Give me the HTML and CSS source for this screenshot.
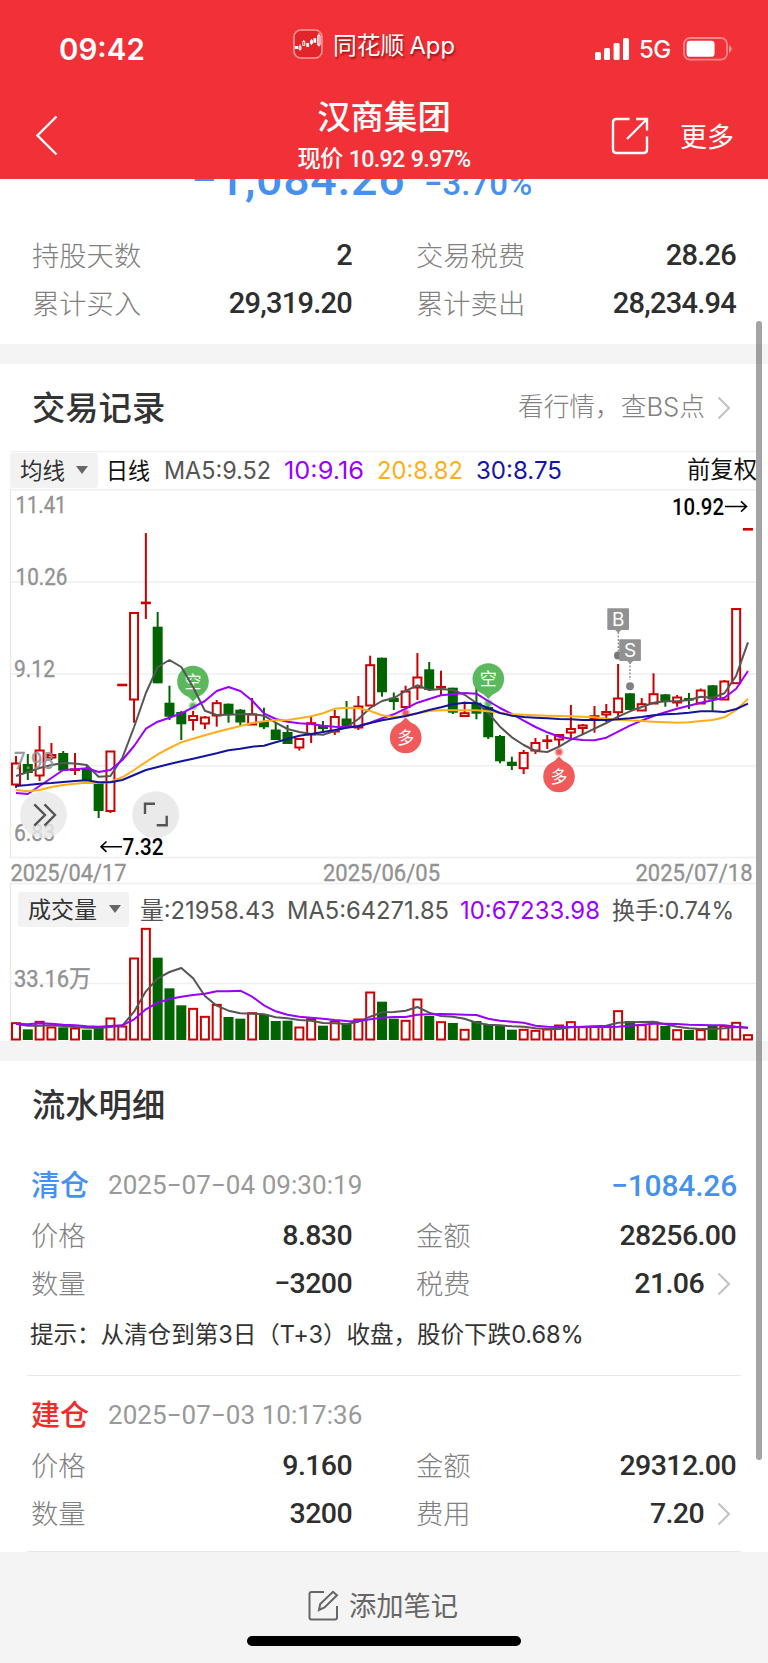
FILE: index.html
```html
<!DOCTYPE html>
<html lang="zh-CN">
<head>
<meta charset="utf-8">
<title>汉商集团</title>
<link rel="stylesheet" href="styles.css">
</head>
<body>
<div class="screen">
  <header class="header">
    <div class="status">
      <span class="time">09:42</span>
      <span class="brand">
        <svg class="brand-icon" width="30" height="30" viewBox="0 0 30 30">
          <rect x="1" y="1" width="28" height="28" rx="7" fill="#e3242b" stroke="#ff9a9c" stroke-width="1.6"/>
          <path fill="#fff" d="M2 17h3v3H2zM13.3 14h2.8v4h-2.8zM20.4 9.3h2.8v4.4h-2.8z"/>
          <path fill="none" stroke="#fff" d="M6 17.5h2v3H6zM7 15.5v6M9.8 12.5h2v4h-2zM10.8 11v2M17.5 11.5h2v3h-2zM18.5 10v6M24.7 6.5h2.4v9.5h-2.4zM25.9 4v13.5"/>
        </svg>
        <span class="brand-name">同花顺<span class="brand-app">App</span></span>
      </span>
      <span class="signal">
        <svg width="34" height="23" viewBox="0 0 34 23" fill="#fff">
          <rect x="0" y="14" width="6" height="8" rx="1.6"/><rect x="9" y="10" width="6" height="12" rx="1.6"/>
          <rect x="18.6" y="5" width="6" height="17" rx="1.6"/><rect x="28" y="0" width="6" height="22" rx="1.6"/>
        </svg>
        <span class="net">5G</span>
        <svg width="50" height="24" viewBox="0 0 50 24">
          <rect x="1" y="1" width="43" height="21.6" rx="6" fill="none" stroke="#fff" stroke-opacity=".42" stroke-width="1.8"/>
          <rect x="3.6" y="3.8" width="28" height="16" rx="3.4" fill="#fff"/>
          <path d="M46 8.2c3.6 1.6 3.6 5.8 0 7.4z" fill="#fff" fill-opacity=".5"/>
        </svg>
      </span>
    </div>
    <div class="nav">
      <svg class="back" width="24" height="42" viewBox="0 0 24 42" fill="none" stroke="#fff" stroke-width="2.4"><path d="M21.5 2.5 2.5 21.5l19 19"/></svg>
      <div class="stock">
        <h1 class="stock-name">汉商集团</h1>
        <p class="stock-price">现价 10.92 9.97%</p>
      </div>
      <svg class="share" width="38" height="38" viewBox="0 0 38 38" fill="none" stroke="#fff" stroke-width="2.4"><path d="M18.500 2H5.500Q2 2 2 5.500v27Q2 36 5.500 36h27q3.500 0 3.500-3.500V19.500M25 2h11v11.500M36 2 16 22"/></svg>
      <span class="more">更多</span>
    </div>
  </header>

  <section class="summary">
    <div class="profit"><span class="profit-amount">−1,084.26</span><span class="profit-rate">−3.70%</span></div>
    <div class="row"><span class="label">持股天数</span><span class="num">2</span><span class="label">交易税费</span><span class="num">28.26</span></div>
    <div class="row"><span class="label">累计买入</span><span class="num">29,319.20</span><span class="label">累计卖出</span><span class="num">28,234.94</span></div>
  </section>
  <div class="band"></div>

  <div class="section-head">
    <h2 class="title">交易记录</h2>
    <span class="link">看行情，查BS点</span>
    <svg class="chev" width="14" height="24" viewBox="0 0 14 24"><path d="M1.500 1.500 12 12 1.500 22.500"/></svg>
  </div>
  <svg class="chart" id="chart" width="768" height="590" viewBox="0 451 768 590"></svg>
  <div class="band"></div>

  <div class="section-head"><h2 class="title">流水明细</h2></div>
  <section class="record">
    <div class="record-head"><span class="kind sell">清仓</span><span class="stamp">2025−07−04 09:30:19</span><span class="gain">−1084.26</span></div>
    <div class="row"><span class="label">价格</span><span class="num">8.830</span><span class="label">金额</span><span class="num">28256.00</span></div>
    <div class="row"><span class="label">数量</span><span class="num">−3200</span><span class="label">税费</span><span class="num more-num">21.06<svg class="chev" width="14" height="24" viewBox="0 0 14 24"><path d="M1.500 1.500 12 12 1.500 22.500"/></svg></span></div>
    <p class="hint">提示：从清仓到第3日（T+3）收盘，股价下跌0.68%</p>
  </section>
  <section class="record">
    <div class="record-head"><span class="kind buy">建仓</span><span class="stamp">2025−07−03 10:17:36</span></div>
    <div class="row"><span class="label">价格</span><span class="num">9.160</span><span class="label">金额</span><span class="num">29312.00</span></div>
    <div class="row"><span class="label">数量</span><span class="num">3200</span><span class="label">费用</span><span class="num more-num">7.20<svg class="chev" width="14" height="24" viewBox="0 0 14 24"><path d="M1.500 1.500 12 12 1.500 22.500"/></svg></span></div>
  </section>

  <footer class="footer">
    <div class="note">
      <svg width="31" height="31" viewBox="0 0 31 31" fill="none" stroke="#666" stroke-width="2"><path d="M16 2H3.500Q1.500 2 1.500 4v23.500q0 2 2 2H27q2 0 2-2V16M11 20l1.200-6L25 1.800l4 3.400L16.500 17.500z"/></svg>
      <span>添加笔记</span>
    </div>
    <div class="home"></div>
  </footer>
  <div class="scrollbar"></div>
</div>
<script src="chart.js"></script>
</body>
</html>
```
FILE: styles.css
```css
* { box-sizing: border-box; margin: 0; padding: 0; }
body { background: #fff; font-family: "Noto Sans CJK SC", sans-serif; color: #333; }
.screen { position: relative; width: 768px; height: 1663px; overflow: hidden; display: flex; flex-direction: column; background: #fff; }
.screen > * { flex-shrink: 0; }

.header { position: relative; z-index: 1; height: 179px; background: #f13037; color: #fff; }
.status { display: grid; grid-template-columns: 293px 302px 1fr; height: 97px; align-items: start; }
.time { padding: 31px 0 0 59px; font: 600 29.5px/36px Inter, sans-serif; }
.brand { display: flex; padding-top: 29px; }
.brand-name { margin: 0 0 0 10px; font-size: 23.8px; line-height: 30px; text-shadow: 1px 2px 2px rgba(90, 0, 0, .6); white-space: nowrap; }
.brand-app { margin-left: 5px; font-family: Inter, sans-serif; }
.signal { display: flex; padding-top: 37px; height: 61px; align-items: center; }
.net { margin: 2px 0 0 10px; width: 44px; font: 500 24px/24px Inter, sans-serif; letter-spacing: -0.5px; }
.nav { display: grid; grid-template-columns: 36px 225px 246px 104px 38px 1fr; height: 82px; align-items: start; }
.back { grid-column: 1; margin: 17px 0 0 35px; }
.stock { grid-column: 3; text-align: center; }
.stock-name { margin-top: -2px; font-size: 33.4px; line-height: 40px; font-weight: 500; }
.stock-price { font: 500 23.3px/28px Roboto, "Noto Sans CJK SC", sans-serif; margin-top: 10px; letter-spacing: -0.7px; word-spacing: 1px; white-space: nowrap; }
.share { grid-column: 5; margin: 20px 0 0; }
.more { margin: 23px 0 0 31px; font-size: 27px; line-height: 32px; }

.summary { height: 165px; }
.profit { display: flex; align-items: baseline; height: 85px; margin-top: -32px; padding: 2px 0 0 191px; color: #4691ee; font-family: Roboto, sans-serif; font-weight: 500; line-height: 60px; }
.profit-amount { width: 233px; font-size: 46.5px; letter-spacing: 0.7px; }
.profit-rate { font-size: 33px; letter-spacing: 0; }
.row { display: grid; grid-template-columns: 160px 160px 160px 1fr; height: 48px; padding: 0 32px; align-items: center; white-space: nowrap; }
.row .label:nth-child(3) { margin-left: 64px; }
.label { margin-top: -5px; font-size: 27.3px; line-height: 40px; font-weight: 300; color: #808080; }
.num { margin-top: -3px; font: 500 29px/40px Roboto, sans-serif; letter-spacing: -0.75px; text-align: right; color: #2e2e2e; }
.more-num { display: flex; justify-content: flex-end; align-items: center; }
.more-num .chev { margin: 0 5px 0 13px; }
.band { height: 20px; background: #f4f4f4; }
.section-head { display: flex; align-items: center; height: 87px; padding: 0 37px 0 32px; }
.title { flex: 1; margin-top: -4px; font-size: 33.3px; line-height: 44px; font-weight: 500; color: #333; }
.link { margin: -1px -1px 0 0; font: 300 25.7px/36px Inter, "Noto Sans CJK SC", sans-serif; color: #808080; }
.chev { margin-left: 13px; fill: none; stroke: #c4c4c4; stroke-width: 2.2; }
.chart { display: block; }

.record { height: 228px; padding-top: 12px; background: linear-gradient(#e8e8e8, #e8e8e8) 27px 100% / 714px 1px no-repeat; }
.record + .record { height: 176px; padding-top: 14px; }
.record .row { padding-left: 31px; grid-template-columns: 161px 160px 160px 1fr; }
.record .num { margin-top: 4px; font-size: 28.5px; letter-spacing: -0.6px; }
.record .label { margin-top: -1px; }
.record-head { display: flex; align-items: center; height: 50px; padding: 0 31px; }
.kind { width: 77px; margin-top: -4px; font-size: 29px; font-weight: 500; }
.sell, .gain { color: #4691ee; }
.buy { color: #f12b2b; }
.stamp { flex: 1; font: 400 26px/36px Roboto, sans-serif; letter-spacing: 0.05px; color: #999; }
.gain { margin-top: 1px; font: 500 30px/36px Roboto, sans-serif; letter-spacing: -0.2px; }
.hint { padding-left: 30px; margin-top: 11px; font: 400 23.6px/36px Inter, "Noto Sans CJK SC", sans-serif; letter-spacing: -0.07px; white-space: nowrap; }

.footer { height: 111px; background: #f4f4f4; display: flex; flex-direction: column; align-items: center; }
.note { display: flex; align-items: center; gap: 10px; height: 84px; padding: 22px 2px 0 0; font-size: 27.3px; line-height: 40px; color: #666; }
.note span { margin-top: -3px; }
.home { width: 274px; height: 10px; border-radius: 5px; background: #000; }
.scrollbar { position: absolute; left: 756px; top: 321px; width: 6px; height: 1139px; border-radius: 3px; background: rgba(90, 90, 90, .55); z-index: 2; }

.c-din { font-family: Roboto, sans-serif; font-weight: 500; }
.c-axis { font-family: Roboto, "Noto Sans CJK SC", sans-serif; font-weight: 400; stroke: #929292; stroke-width: .35px; }
.c-ui { font-family: Inter, "Noto Sans CJK SC", sans-serif; }
```
FILE: chart.js
```js
// Candles: colour, high, body top, body bottom, low (chart coordinates)
const candles = [
  'r 756 763 785 788','g 754 764 773 780','r 726 750 776 781','r 743 754.5 758 760','g 751 753 770.7 771','r 753 768.5 770 775',
  'g 765 769 780.5 781','g 783 783 811 818','r 751 751 811.5 813','r 685 684.7 685.3 685','r 612.5 612.5 700 722.7','r 533 602.2 603.2 619',
  'g 612 626.7 683.3 683.3','g 685.7 702.7 716.7 720','g 711 712 724.3 740','r 711 715.5 720.5 730.5','r 716 717 724 729','r 700 702.7 716 726.7',
  'g 703.5 703.7 714 722.7','g 709 709.7 722.5 726','r 698 714 725 725','g 707.7 721.7 727.3 729','g 723 729.5 740 740','g 725 732 744 744',
  'r 738 738.5 748 750.5','r 717 722.7 735 743','g 721 725.7 729 731','r 710 716.5 732 735','g 701 718.5 726.7 726.7','r 696 706 728 730',
  'r 655.7 664.7 706 706','g 657.7 657.7 692.3 696.7','g 692.5 697.7 702 710','r 685.7 691 707.5 708','r 653 677 688 700','g 662 669.3 690 690',
  'r 670.7 686.5 687.5 696','g 687.7 687.7 712.7 714','r 701.7 712.7 716.5 716.5','g 686 702.7 713.7 719.3','g 703 707 737.3 739','g 735 736 761.3 763.3',
  'g 756.7 761.7 766 770','r 750 752.5 768.7 774','r 738 742.5 751 754','r 735 740 741 749','r 734 734.5 740 747','r 705 728.5 733 738',
  'r 724 725 728.5 735','r 706 715.7 718.5 732.7','r 704 711.5 715 722','r 664 698 712.7 720','g 693.3 693.3 710 710','r 698 703.7 711 711',
  'r 673.3 693.7 704 704','g 694 694.3 701.5 706.7','r 695 697 703 706.7','g 693 698 700.5 709','r 688.5 690 704 704','g 685 685.3 699.5 710.7',
  'r 680 681 700 700','r 608.5 608.5 683.7 683.7','r 529.3 529 529.6 529.3'
].map(s => s.split(' ').map((v, i) => i ? +v : v));

const volumeTops = [458,478,454,471,472,474,479,474,444,468,264,175,263,355,406,415,439,403,441,446,428,433,453,452,471,446,467,453,461,447,366,395,446,451,387,438,455,459,478,453,462,465,479,478,481,477,465,455,470,469,467,422,453,464,456,468,479,480,479,467,467,457,494];

const ma5 = [776,772,768,765,763,763.5,765,776.7,776,758,727,693,667,660,667,687,710.7,715,714.7,714.3,714,715.7,722.7,729,732,734,734.7,731,727,719,708,701,698,691,685.3,690,689,690,694.7,703,713,726.7,737.3,745,751,752,746.7,739.7,734.3,728.7,723,716.7,711.3,707,702.7,701.3,701.3,700,696.7,697.7,693.3,675.7,642.3];
const ma10 = [793,794,786,778,770,769.3,768.3,772,770,760,746,728.7,721.7,717.7,713.3,707.3,701,691,687,691,700.5,713.3,719,721.7,723.3,724,725.7,726.7,727.3,726,722.7,718.3,714.3,708.7,702.7,699,695.3,694.3,693,693.7,701,708,714,720.7,727,732.3,736.7,738.7,740,740.3,737.7,731.7,725.7,720.7,716,712.3,708.7,705.7,702.7,700.3,697.7,688.7,671];
const ma20 = [790,791.3,790,787,785,783.7,782.7,783,782,777.3,770,762,754.3,748,742.3,738.7,735.3,732,729,726,723,721.3,720.3,720,718.3,716.3,713.3,708.7,707.7,708.3,711,715.3,717,716.3,713.3,711,710.3,710.3,710.3,710.3,711.3,713,714.3,714.7,715.3,715.7,716,716.3,716.7,717.3,718.7,719.7,720.3,721,721.7,722.3,722.7,722.3,721,720,717.3,710,698.7];
const ma30 = [786,785,783.7,783,782,781,780.3,782.3,782.3,780,775,770,767,764,761.3,758.7,756,753.3,750.3,748.7,746.7,745.7,742.3,739,735.7,734,732,730,727.7,726.3,723,720.3,718.3,716,713.3,710,707.3,704.3,702.7,703.3,708,713,715.7,717,717.7,718.3,719,719.3,720,720,720,719.3,718.3,717,715.3,714.3,713.7,712.7,711.3,711.3,712,709,703.7];
const vol5 = [462,467,467,466,468,471,473,474,471,467,425,364,325,306,294,325,378,407,422,430,431,433,442,445,450,452,459,460,462,455,440,427,426,422,411,428,438,440,446,458,464,466,469,470,475,477,477,472,470,469,467,458,457,456,455,463,470,475,477,477,475,471,473];
const vol10 = [461,463,460,461,464,466,469,470,468,466,448,418,398,387,380,375,371,364,364,362,380,406,424,434,440,443,446,450,453,454,448,443,441,441,434,433,432,433,434,435,446,452,455,458,467,470,471,471,471,470,471,470,467,464,461,461,462,464,465,466,466,470,473];

const RED = '#cc0000', GREEN = '#006400';
const cx = i => 16 + 11.806 * i;
const volY = p => 870 + p / 3;
const out = [];
const line = (x1, y1, x2, y2, c, w = 2, extra = '') => out.push(`<line x1="${x1}" y1="${y1}" x2="${x2}" y2="${y2}" stroke="${c}" stroke-width="${w}" ${extra}/>`);
const text = (s, x, y, w, size, fill, cls, extra = '') => out.push(`<text x="${x}" y="${y}" textLength="${w}" lengthAdjust="spacingAndGlyphs" font-size="${size}" fill="${fill}" class="${cls}" ${extra}>${s}</text>`);
const curve = (data, c, f = v => v) => out.push(`<polyline fill="none" stroke="${c}" stroke-width="2" stroke-linejoin="round" points="${data.map((v, i) => cx(i).toFixed(1) + ',' + f(v).toFixed(1)).join(' ')}"/>`);
const bar = (x, top, bottom, c) => {
  if (c === 'r' && bottom - top > 2) out.push(`<rect x="${x - 4}" y="${top + 0.5}" width="8" height="${bottom - top - 1}" fill="#fff" stroke="${RED}" stroke-width="2"/>`);
  else out.push(`<rect x="${x - 5}" y="${Math.min(top, bottom - 1.6)}" width="10" height="${Math.max(2.6, bottom - top)}" fill="${c === 'r' ? RED : GREEN}"/>`);
};

// Frames and grid
for (const y of [451.5, 489.7, 582, 674, 765.7, 857.5, 883.5, 983.5]) line(10, y, 756, y, '#efefef', 1.6);
line(10.5, 489, 10.5, 858, '#e8e8e8', 1.4);
line(10.5, 883, 10.5, 1041, '#e8e8e8', 1.4);

// Legend of the price pane
out.push('<rect x="10" y="453" width="88" height="35" rx="3" fill="#f2f2f2"/><path d="M76 466h12l-6 8z" fill="#666"/>');
text('均线', 20, 478.5, 45, 23, '#333', 'c-ui');
text('日线', 106, 478.5, 44, 23, '#111', 'c-ui');
text('MA5:9.52', 164, 478.7, 107, 23.8, '#555', 'c-ui');
text('10:9.16', 284, 478.7, 80, 23.8, '#9a00ff', 'c-ui');
text('20:8.82', 377, 478.7, 86, 23.8, '#ffae19', 'c-ui');
text('30:8.75', 476, 478.7, 86, 23.8, '#1414a5', 'c-ui');
text('前复权', 687, 478, 70, 23.5, '#111', 'c-ui');

// Pins with a tail and a small anchor dot
const pin = (ch, x, y, dir, c) => {
  out.push(`<circle cx="${x}" cy="${y}" r="15.8" fill="${c}"/><path d="M${x - 7} ${y + dir * 13}L${x} ${y + dir * 20}L${x + 7} ${y + dir * 13}z" fill="${c}"/>`);
  out.push(`<circle cx="${x}" cy="${y + dir * 24.5}" r="4.5" fill="${c}" opacity=".45"/><circle cx="${x}" cy="${y + dir * 24.5}" r="2.8" fill="${c}"/>`);
  text(ch, x - 8.5, y + 6.3, 17, 17, '#fff', 'c-ui');
};

candles.forEach(([c, hi, top, bottom, lo], i) => {
  const x = cx(i);
  if (lo - hi > 0.5) line(x, hi, x, lo, c === 'r' ? RED : GREEN, 2);
  bar(x, top, bottom, c);
});
pin('空', 193, 681.5, 1, '#5cb85c');
pin('空', 488.3, 679, 1, '#5cb85c');
pin('多', 405.7, 737.5, -1, '#f05a5a');
pin('多', 559, 776.5, -1, '#f05a5a');
curve(ma5, '#555');
curve(ma10, '#9a00ff');
curve(ma20, '#ffae19');
curve(ma30, '#14149b');

// Buy and sell flags
out.push('<circle cx="618" cy="655.5" r="4" fill="#777"/>');
line(618.3, 632, 618.3, 653, '#888', 1.3, 'stroke-dasharray="2 1.5"');
line(630, 662, 630, 680, '#888', 1.3, 'stroke-dasharray="2 1.5"');
out.push('<circle cx="630" cy="686.3" r="4" fill="#808080"/>');
for (const [ch, x, y] of [['B', 607.3, 608.3], ['S', 619.2, 639.2]]) {
  out.push(`<path d="M${x + 1} ${y}h19.7q1 0 1 1v19.7q0 1-1 1h-6.8l-3 3-3-3h-6.9q-1 0-1-1v-19.7q0-1 1-1z" fill="#929292"/>`);
  out.push(`<text x="${x + 10.8}" y="${y + 17.7}" text-anchor="middle" font-size="19" fill="#fff" class="c-ui">${ch}</text>`);
}

// Axis labels
text('11.41', 15.5, 513, 51, 23.5, '#929292', 'c-axis');
text('10.26', 15.5, 585, 52, 23.5, '#929292', 'c-axis');
text('9.12', 14, 677, 41, 23.5, '#929292', 'c-axis');
text('7.98', 14, 768.5, 40, 23.5, '#929292', 'c-axis', 'fill-opacity=".9"');
text('6.83', 14, 841, 41, 23.5, '#929292', 'c-axis');
text('7.32', 122.5, 855, 41, 23.5, '#000', 'c-din');
text('10.92', 672, 515, 52, 23.5, '#000', 'c-din');
out.push('<path d="M122 846.7H101M106.5 841.5l-5.5 5.2 5.5 5.2M725 506.5h21.5M741 501.3l5.5 5.2-5.5 5.2" fill="none" stroke="#000" stroke-width="1.6"/>');
text('2025/04/17', 10.5, 881, 116, 23.5, '#929292', 'c-axis');
text('2025/06/05', 323, 881, 117, 23.5, '#929292', 'c-axis');
text('2025/07/18', 635.5, 881, 117, 23.5, '#929292', 'c-axis');

// Pane buttons
out.push('<circle cx="43.5" cy="814.7" r="23.5" fill="#e8e8e8" fill-opacity=".82"/><circle cx="155.7" cy="814.7" r="23.5" fill="#e8e8e8" fill-opacity=".9"/>');
out.push('<path d="M34.3 804.3 45 815l-10.7 10.7M44.5 804.3 55 815l-10.5 10.7M145 814v-10.3h10M156.7 825.3h10v-9.6" fill="none" stroke="#555" stroke-width="2.4"/>');

// Volume pane
out.push('<rect x="18" y="892" width="111" height="35" rx="3" fill="#f2f2f2"/><path d="M109 905h12l-6 8z" fill="#666"/>');
text('成交量', 28, 918, 69, 23, '#333', 'c-ui');
text('量:21958.43', 140, 918.5, 135, 23.8, '#555', 'c-ui');
text('MA5:64271.85', 287, 918.5, 162, 23.8, '#555', 'c-ui');
text('10:67233.98', 460, 918.5, 140, 23.8, '#9a00ff', 'c-ui');
text('换手:0.74%', 612, 918.5, 122, 23.8, '#555', 'c-ui');
text('33.16万', 14, 987, 77, 23.5, '#929292', 'c-axis');
volumeTops.forEach((p, i) => bar(cx(i), volY(p), 1040, candles[i][0]));
curve(vol5, '#555', volY);
curve(vol10, '#9a00ff', volY);

document.getElementById('chart').innerHTML = out.join('');
```
